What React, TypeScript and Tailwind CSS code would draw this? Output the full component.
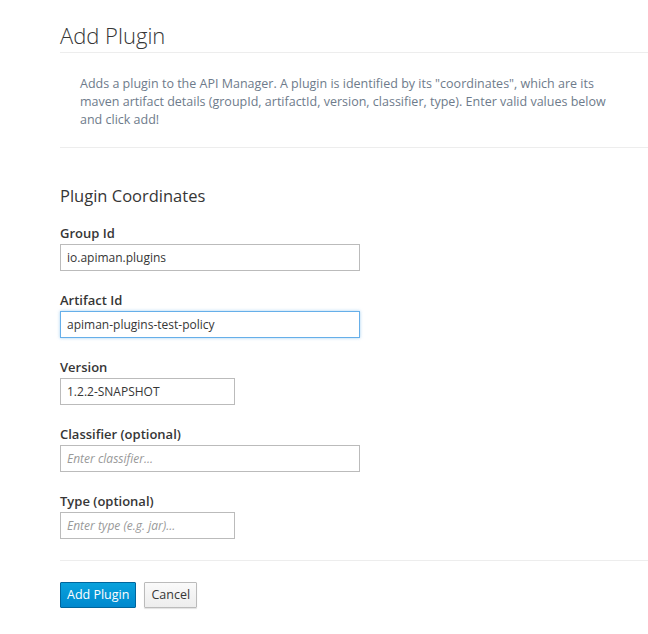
import React from "react";

const inputBase =
  "h-[27px] border px-[6px] text-[12px] text-[#363636] outline-none bg-white placeholder:italic placeholder:text-[#999]";

function Field({
  label,
  value,
  placeholder,
  wide,
  focused,
}: {
  label: string;
  value?: string;
  placeholder?: string;
  wide?: boolean;
  focused?: boolean;
}) {
  return (
    <div className="flex flex-col">
      <label className="text-[13px] font-semibold text-[#363636] leading-[18px] mb-[2px]">{label}</label>
      <input
        readOnly
        defaultValue={value}
        placeholder={placeholder}
        className={`${inputBase} ${wide ? "w-[300px]" : "w-[175px]"} ${
          focused
            ? "border-[#66afe9] shadow-[0_0_3px_rgba(102,175,233,0.6)]"
            : "border-[#bbb]"
        }`}
      />
    </div>
  );
}

export default function App() {
  return (
    <div
      className="w-[648px] h-[634px] bg-white overflow-hidden pl-[60px]"
      style={{ fontFamily: '"Open Sans", sans-serif' }}
    >
      <div className="pt-[21px]">
        <h1 className="text-[22px] font-light text-[#363636] leading-[28px]">Add Plugin</h1>
        <div className="mt-[3px] border-t border-[#ededed]" />
        <p className="pl-[20px] pr-[20px] pt-[22px] pb-[18px] text-[12.5px] leading-[18px] text-[#6e7b8b] max-w-[590px]">
          Adds a plugin to the API Manager. A plugin is identified by its "coordinates", which are its maven artifact details (groupId, artifactId, version, classifier, type). Enter valid values below and click add!
        </p>
        <div className="border-t border-[#ededed]" />
      </div>
      <div className="pt-[37px]">
        <h2 className="text-[16.5px] text-[#363636] leading-[22px] mb-[17px]">Plugin Coordinates</h2>
        <div className="flex flex-col gap-[20px]">
          <Field label="Group Id" value="io.apiman.plugins" wide />
          <Field label="Artifact Id" value="apiman-plugins-test-policy" wide focused />
          <Field label="Version" value="1.2.2-SNAPSHOT" />
          <Field label="Classifier (optional)" placeholder="Enter classifier..." wide />
          <Field label="Type (optional)" placeholder="Enter type (e.g. jar)..." />
        </div>
      </div>
      <div className="mt-[21px] border-t border-[#ededed]" />
      <div className="pt-[21px] flex gap-[8px]">
        <button className="h-[26px] px-[6px] text-[12.5px] text-white border border-[#00659c] bg-gradient-to-b from-[#0aa2dc] to-[#0088ce] rounded-[1px]">
          Add Plugin
        </button>
        <button className="h-[26px] px-[6px] text-[12.5px] text-[#363636] border border-[#bbb] bg-gradient-to-b from-[#fafafa] to-[#ededed] rounded-[1px] shadow-[0_1px_1px_rgba(0,0,0,0.12)]">
          Cancel
        </button>
      </div>
    </div>
  );
}
